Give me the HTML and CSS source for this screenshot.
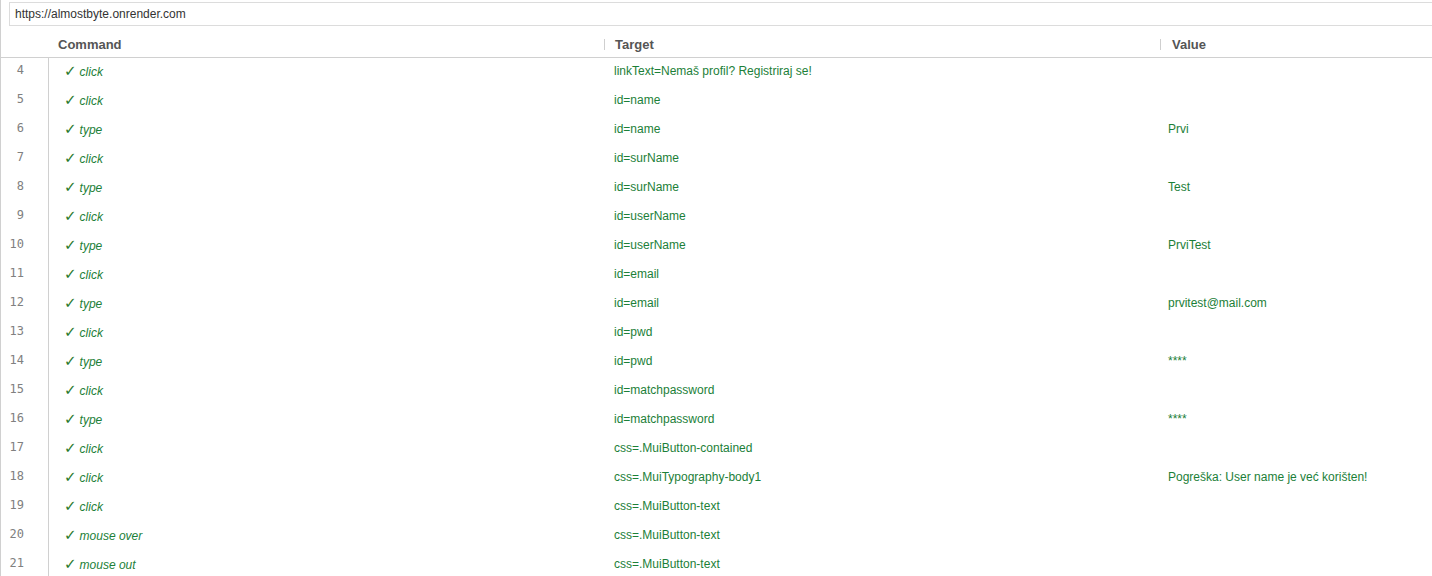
FILE: index.html
```html
<!DOCTYPE html>
<html>
<head>
<meta charset="utf-8">
<link rel="stylesheet" href="styles.css">
</head>
<body>
<div class="page">
  <div class="urlbar"><input class="url" type="text" value="https://almostbyte.onrender.com"></div>
  <div class="grid header">
    <div class="h-num"></div>
    <div class="h-cmd">Command</div>
    <div class="h-col"><span class="sep"></span><span class="h-target">Target</span></div>
    <div class="h-col"><span class="sep"></span><span class="h-value">Value</span></div>
  </div>
  <div class="rows">
    <div class="grid row"><div class="num">4</div><div class="cmd"><span class="chk">✓</span><i>click</i></div><div class="target">linkText=Nemaš profil? Registriraj se!</div><div class="value"></div></div>
    <div class="grid row"><div class="num">5</div><div class="cmd"><span class="chk">✓</span><i>click</i></div><div class="target">id=name</div><div class="value"></div></div>
    <div class="grid row"><div class="num">6</div><div class="cmd"><span class="chk">✓</span><i>type</i></div><div class="target">id=name</div><div class="value">Prvi</div></div>
    <div class="grid row"><div class="num">7</div><div class="cmd"><span class="chk">✓</span><i>click</i></div><div class="target">id=surName</div><div class="value"></div></div>
    <div class="grid row"><div class="num">8</div><div class="cmd"><span class="chk">✓</span><i>type</i></div><div class="target">id=surName</div><div class="value">Test</div></div>
    <div class="grid row"><div class="num">9</div><div class="cmd"><span class="chk">✓</span><i>click</i></div><div class="target">id=userName</div><div class="value"></div></div>
    <div class="grid row"><div class="num">10</div><div class="cmd"><span class="chk">✓</span><i>type</i></div><div class="target">id=userName</div><div class="value">PrviTest</div></div>
    <div class="grid row"><div class="num">11</div><div class="cmd"><span class="chk">✓</span><i>click</i></div><div class="target">id=email</div><div class="value"></div></div>
    <div class="grid row"><div class="num">12</div><div class="cmd"><span class="chk">✓</span><i>type</i></div><div class="target">id=email</div><div class="value">prvitest@mail.com</div></div>
    <div class="grid row"><div class="num">13</div><div class="cmd"><span class="chk">✓</span><i>click</i></div><div class="target">id=pwd</div><div class="value"></div></div>
    <div class="grid row"><div class="num">14</div><div class="cmd"><span class="chk">✓</span><i>type</i></div><div class="target">id=pwd</div><div class="value">****</div></div>
    <div class="grid row"><div class="num">15</div><div class="cmd"><span class="chk">✓</span><i>click</i></div><div class="target">id=matchpassword</div><div class="value"></div></div>
    <div class="grid row"><div class="num">16</div><div class="cmd"><span class="chk">✓</span><i>type</i></div><div class="target">id=matchpassword</div><div class="value">****</div></div>
    <div class="grid row"><div class="num">17</div><div class="cmd"><span class="chk">✓</span><i>click</i></div><div class="target">css=.MuiButton-contained</div><div class="value"></div></div>
    <div class="grid row"><div class="num">18</div><div class="cmd"><span class="chk">✓</span><i>click</i></div><div class="target">css=.MuiTypography-body1</div><div class="value">Pogreška: User name je već korišten!</div></div>
    <div class="grid row"><div class="num">19</div><div class="cmd"><span class="chk">✓</span><i>click</i></div><div class="target">css=.MuiButton-text</div><div class="value"></div></div>
    <div class="grid row"><div class="num">20</div><div class="cmd"><span class="chk">✓</span><i>mouse over</i></div><div class="target">css=.MuiButton-text</div><div class="value"></div></div>
    <div class="grid row"><div class="num">21</div><div class="cmd"><span class="chk">✓</span><i>mouse out</i></div><div class="target">css=.MuiButton-text</div><div class="value"></div></div>
  </div>
</div>
</body>
</html>
```

FILE: styles.css
```css
html, body {
  margin: 0;
  padding: 0;
  height: 100%;
  overflow: hidden;
  background: #fff;
}
.page {
  height: 576px;
  border-left: 1px solid #d0d0d0;
  font-family: "Liberation Sans", Arial, sans-serif;
  font-size: 12px;
  box-sizing: border-box;
}
.urlbar {
  padding: 2px 0 0 8px;
  height: 24px;
  box-sizing: border-box;
}
.url {
  display: block;
  width: 100%;
  height: 24px;
  box-sizing: border-box;
  margin: 0;
  border: 1px solid #dcdcdc;
  border-right: none;
  padding: 0 0 0 5px;
  font-family: "Liberation Sans", Arial, sans-serif;
  font-size: 12px;
  color: #333;
  outline: none;
}
.grid {
  display: grid;
  grid-template-columns: 48px 555px 556px 1fr;
}
.header {
  height: 34px;
  border-bottom: 1px solid #d0d0d0;
  box-sizing: border-box;
  align-items: center;
  font-size: 13px;
  font-weight: bold;
  color: #555;
  padding-top: 8px;
}
.h-cmd {
  padding-left: 9px;
}
.h-col {
  display: flex;
  align-items: center;
}
.sep {
  display: inline-block;
  width: 1px;
  height: 11px;
  background: #cfcfcf;
}
.h-target {
  margin-left: 10px;
}
.h-value {
  margin-left: 11px;
}
.row {
  height: 29px;
  align-items: center;
  color: #1c8038;
}
.num {
  height: 100%;
  display: flex;
  align-items: center;
  justify-content: flex-end;
  padding-right: 24px;
  border-right: 1px solid #d0d0d0;
  font-family: "DejaVu Sans Mono", "Liberation Mono", monospace;
  font-size: 12px;
  color: #808080;
  box-sizing: border-box;
  padding-bottom: 6px;
}
.cmd {
  padding-left: 15px;
  padding-bottom: 4px;
  display: flex;
  align-items: baseline;
}
.chk {
  color: #2a7a2a;
  font-family: "DejaVu Sans", sans-serif;
  font-size: 15px;
  font-style: normal;
  margin-right: 3px;
}
.cmd i {
  font-style: italic;
}
.target {
  padding-left: 10px;
  padding-bottom: 4px;
}
.value {
  padding-left: 8px;
  padding-bottom: 4px;
}
```
